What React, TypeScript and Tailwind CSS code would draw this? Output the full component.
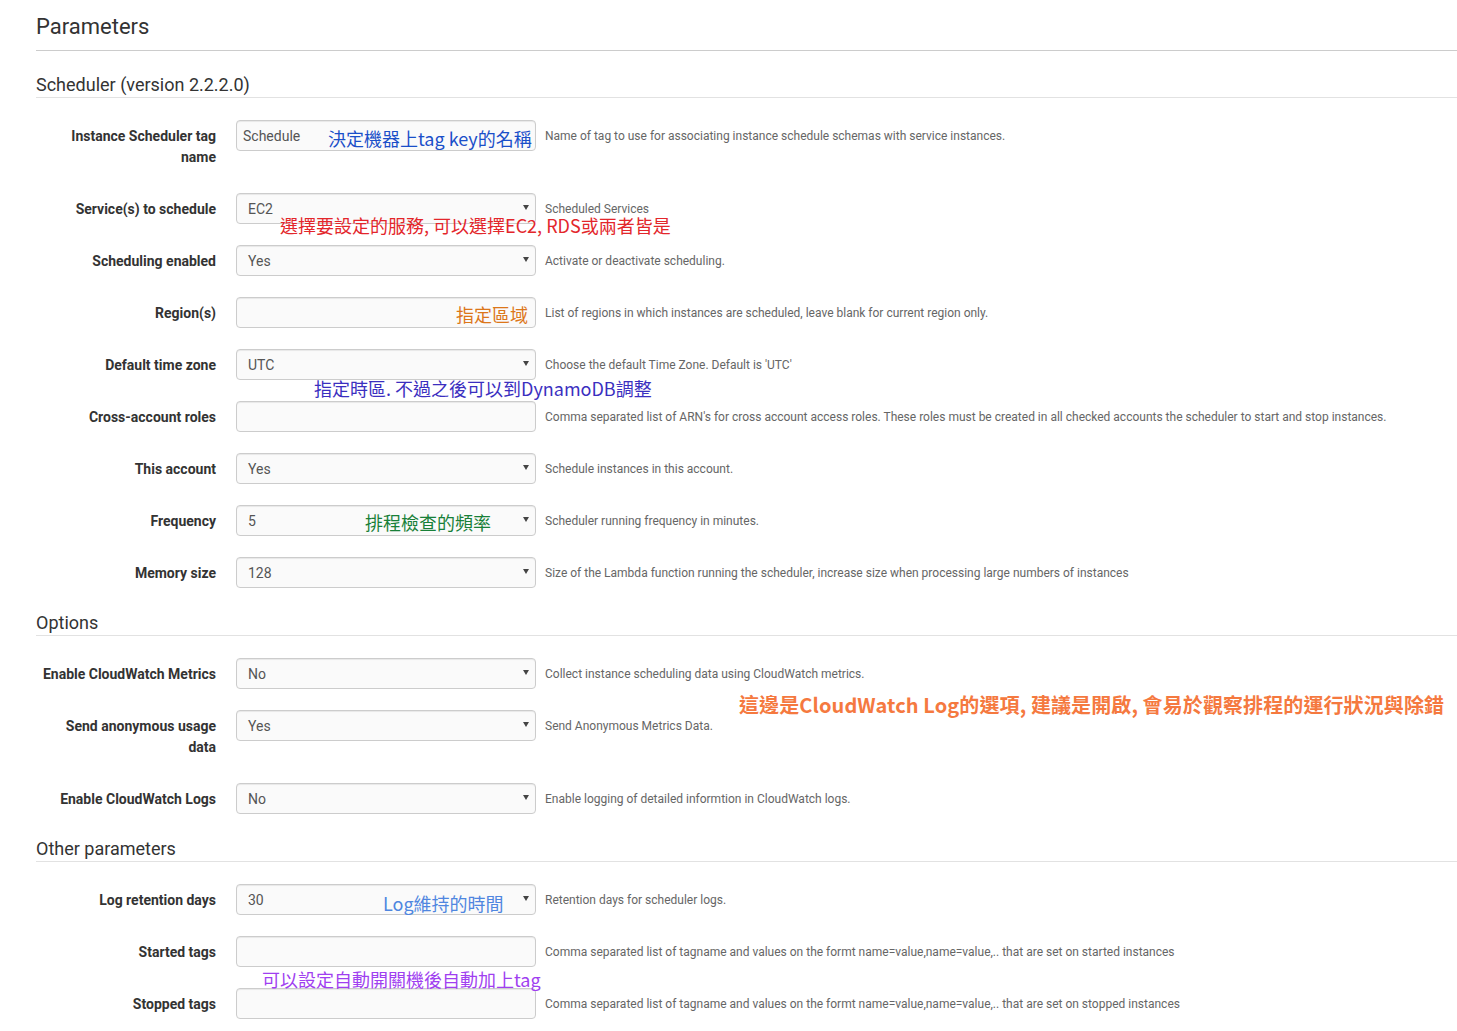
import React from "react";

type Field = {
  label: string;
  kind: "input" | "select";
  value?: string;
  desc: string;
};

const SECTIONS: { title: string; fields: Field[] }[] = [
  {
    title: "Scheduler (version 2.2.2.0)",
    fields: [
      { label: "Instance Scheduler tag name", kind: "input", value: "Schedule", desc: "Name of tag to use for associating instance schedule schemas with service instances." },
      { label: "Service(s) to schedule", kind: "select", value: "EC2", desc: "Scheduled Services" },
      { label: "Scheduling enabled", kind: "select", value: "Yes", desc: "Activate or deactivate scheduling." },
      { label: "Region(s)", kind: "input", desc: "List of regions in which instances are scheduled, leave blank for current region only." },
      { label: "Default time zone", kind: "select", value: "UTC", desc: "Choose the default Time Zone. Default is 'UTC'" },
      { label: "Cross-account roles", kind: "input", desc: "Comma separated list of ARN's for cross account access roles. These roles must be created in all checked accounts the scheduler to start and stop instances." },
      { label: "This account", kind: "select", value: "Yes", desc: "Schedule instances in this account." },
      { label: "Frequency", kind: "select", value: "5", desc: "Scheduler running frequency in minutes." },
      { label: "Memory size", kind: "select", value: "128", desc: "Size of the Lambda function running the scheduler, increase size when processing large numbers of instances" },
    ],
  },
  {
    title: "Options",
    fields: [
      { label: "Enable CloudWatch Metrics", kind: "select", value: "No", desc: "Collect instance scheduling data using CloudWatch metrics." },
      { label: "Send anonymous usage data", kind: "select", value: "Yes", desc: "Send Anonymous Metrics Data." },
      { label: "Enable CloudWatch Logs", kind: "select", value: "No", desc: "Enable logging of detailed informtion in CloudWatch logs." },
    ],
  },
  {
    title: "Other parameters",
    fields: [
      { label: "Log retention days", kind: "select", value: "30", desc: "Retention days for scheduler logs." },
      { label: "Started tags", kind: "input", desc: "Comma separated list of tagname and values on the formt name=value,name=value,.. that are set on started instances" },
      { label: "Stopped tags", kind: "input", desc: "Comma separated list of tagname and values on the formt name=value,name=value,.. that are set on stopped instances" },
    ],
  },
];

// hand-written notes that were scribbled over the screenshot
const NOTES = [
  { text: "決定機器上tag key的名稱", cls: "left-[328px] top-[126px] text-[#1a4fc9]" },
  { text: "選擇要設定的服務, 可以選擇EC2, RDS或兩者皆是", cls: "left-[280px] top-[213px] text-[#e3262b]" },
  { text: "指定區域", cls: "left-[456px] top-[302px] text-[#dc7619]" },
  { text: "指定時區. 不過之後可以到DynamoDB調整", cls: "left-[314px] top-[376px] text-[#3b2fbf]" },
  { text: "排程檢查的頻率", cls: "left-[365px] top-[510px] text-[#188038]" },
  { text: "這邊是CloudWatch Log的選項, 建議是開啟, 會易於觀察排程的運行狀況與除錯", cls: "left-[739px] top-[692px] text-[20px] leading-[26px] tracking-[0.1px] font-bold text-[#f5793f]" },
  { text: "Log維持的時間", cls: "left-[383px] top-[891px] text-[#4f86e0]" },
  { text: "可以設定自動開關機後自動加上tag", cls: "left-[262px] top-[967px] text-[#a03ff0]" },
];

function Control({ field }: { field: Field }) {
  if (field.kind === "input") {
    return (
      <div className="flex h-[31px] w-[300px] shrink-0 items-center rounded-[4px] border border-[#ccc] bg-[#fafafa] px-[6px] pt-[2px] text-[14px] text-[#555] shadow-[inset_0_1px_1px_rgba(0,0,0,0.075)]">
        {field.value}
      </div>
    );
  }
  return (
    <div className="flex h-[31px] w-[300px] shrink-0 items-center justify-between rounded-[4px] border border-[#ccc] bg-[#fafafa] pl-[11px] pr-[6px] text-[14px] text-[#555] shadow-[inset_0_1px_1px_rgba(0,0,0,0.075)]">
      <span className="pt-[2px]">{field.value}</span>
      <svg width="6" height="5" viewBox="0 0 6 5" className="-mt-[2px]">
        <path d="M0 0h6L3 5z" fill="#444" />
      </svg>
    </div>
  );
}

function Row({ field }: { field: Field }) {
  return (
    <div className="mb-[21px] flex items-start">
      <label className="w-[180px] shrink-0 pl-[3px] pt-[6px] pb-[4px] text-right text-[14px] font-bold leading-[21px] text-[#333]">
        {field.label}
      </label>
      <div className="ml-[20px]">
        <Control field={field} />
      </div>
      <p className="ml-[9px] pt-[8px] text-[12px] leading-[17px] text-[#666]">{field.desc}</p>
    </div>
  );
}

export default function App() {
  return (
    <div className="relative min-h-[1031px] bg-white pl-[36px] pt-[13px] font-['Roboto','Liberation_Sans',sans-serif]">
      <h2 className="border-b border-[#ccc] pb-[9px] text-[22px] leading-[28px] text-[#333]">Parameters</h2>
      <div className="pt-[20px]">
        {SECTIONS.map((s) => (
          <section key={s.title}>
            <h3 className="mb-[22px] border-b border-[#e2e2e2] pb-[2px] pt-[3px] text-[18px] leading-[21px] text-[#333]">
              {s.title}
            </h3>
            {s.fields.map((f) => (
              <Row key={f.label} field={f} />
            ))}
          </section>
        ))}
      </div>

      {NOTES.map((n) => (
        <span
          key={n.text}
          className={`absolute whitespace-nowrap text-[18px] leading-[24px] font-['Noto_Sans_CJK_TC','Noto_Sans_CJK_SC',sans-serif] ${n.cls}`}
        >
          {n.text}
        </span>
      ))}
    </div>
  );
}
